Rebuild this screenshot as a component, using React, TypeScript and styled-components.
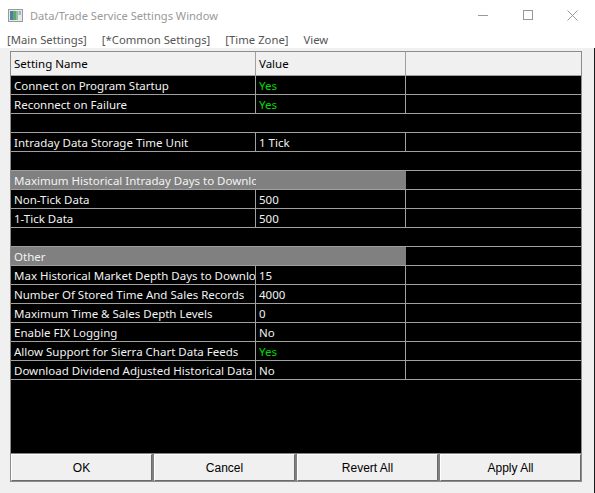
import * as React from 'react'
import styled, { createGlobalStyle } from 'styled-components'

const Global = createGlobalStyle`
  html, body { margin: 0; padding: 0; background: #ffffff; }
  body { font-family: "Noto Sans", "Open Sans", sans-serif; }
`

type Row =
  | { kind: 'item'; name: string; value: string; green?: boolean }
  | { kind: 'section'; name: string }
  | { kind: 'blank' }

const rows: Row[] = [
  { kind: 'item', name: 'Connect on Program Startup', value: 'Yes', green: true },
  { kind: 'item', name: 'Reconnect on Failure', value: 'Yes', green: true },
  { kind: 'blank' },
  { kind: 'item', name: 'Intraday Data Storage Time Unit', value: '1 Tick' },
  { kind: 'blank' },
  { kind: 'section', name: 'Maximum Historical Intraday Days to Download' },
  { kind: 'item', name: 'Non-Tick Data', value: '500' },
  { kind: 'item', name: '1-Tick Data', value: '500' },
  { kind: 'blank' },
  { kind: 'section', name: 'Other' },
  { kind: 'item', name: 'Max Historical Market Depth Days to Download', value: '15' },
  { kind: 'item', name: 'Number Of Stored Time And Sales Records', value: '4000' },
  { kind: 'item', name: 'Maximum Time & Sales Depth Levels', value: '0' },
  { kind: 'item', name: 'Enable FIX Logging', value: 'No' },
  { kind: 'item', name: 'Allow Support for Sierra Chart Data Feeds', value: 'Yes', green: true },
  { kind: 'item', name: 'Download Dividend Adjusted Historical Data', value: 'No' },
]

const Window = styled.div`
  width: 595px;
  height: 493px;
  display: flex;
  flex-direction: column;
  background: #ffffff;
  overflow: hidden;
`

const TitleBar = styled.div`
  height: 30px;
  display: flex;
  align-items: center;
  padding-left: 8px;
  font-size: 11.1px;
  color: #999999;
`

const Title = styled.span`
  margin-left: 7px;
  flex: 1;
`

const Controls = styled.div`
  display: flex;
  height: 30px;
`

const Ctl = styled.div`
  width: 45px;
  height: 30px;
  display: flex;
  align-items: center;
  justify-content: center;
`

const MenuBar = styled.div`
  height: 18px;
  display: flex;
  align-items: center;
  padding-left: 7px;
  gap: 15px;
  font-size: 11.3px;
  color: #555555;
`

const Body = styled.div`
  flex: 1;
  background: #f0f0f0;
  padding: 3px 12px 11px 10px;
  border-right: 1px solid #1a1a1a;
  display: flex;
`

const Panel = styled.div`
  flex: 1;
  display: flex;
  flex-direction: column;
  border: 1px solid #8c8c8c;
  background: #000000;
`

const Grid = styled.div`
  flex: 1;
  display: flex;
  flex-direction: column;
`

const HeaderRow = styled.div`
  height: 23px;
  display: flex;
  background: #f0f0f0;
  border-bottom: 1px solid #a0a0a0;
  font-size: 11.5px;
  color: #000000;
`

const Line = styled.div`
  height: 18px;
  display: flex;
  border-bottom: 1px solid #a0a0a0;
  font-size: 11.5px;
  color: #f2f2f2;
  background: #000000;
`

const Cell = styled.div<{ $w?: number; $green?: boolean; $edge?: boolean }>`
  width: ${({ $w }) => ($w ? `${$w}px` : 'auto')};
  flex: ${({ $w }) => ($w ? 'none' : '1')};
  box-sizing: border-box;
  padding-left: 3px;
  display: flex;
  align-items: center;
  white-space: nowrap;
  overflow: hidden;
  border-right: ${({ $edge }) => ($edge ? '1px solid #a0a0a0' : 'none')};
  color: ${({ $green }) => ($green ? '#00dc00' : 'inherit')};
`

const SectionFill = styled.div`
  width: 395px;
  flex: none;
  background: #808080;
  display: flex;
  align-items: center;
`

const SectionText = styled.div`
  width: 245px;
  padding-left: 3px;
  box-sizing: border-box;
  white-space: nowrap;
  overflow: hidden;
`

const Buttons = styled.div`
  display: flex;
  gap: 2px;
  background: #808080;
  border-top: 1px solid #808080;
`

const Button = styled.button`
  flex: 1;
  height: 27px;
  margin: 0;
  padding: 0;
  background: #f0f0f0;
  border-style: solid;
  border-width: 1px;
  border-color: #ffffff #6b6b6b #6b6b6b #ffffff;
  font-family: "Liberation Sans", Arial, sans-serif;
  font-size: 12px;
  color: #000000;
`

const AppIcon = () => (
  <svg width="15" height="13" viewBox="0 0 15 13">
    <rect x="0.5" y="0.5" width="14" height="12" fill="#e8e8e8" stroke="#9a9a9a" />
    <rect x="2" y="2" width="3" height="9" fill="#4a7fb0" />
    <rect x="5" y="2" width="3" height="9" fill="#5fa86a" />
    <rect x="8" y="2" width="2" height="9" fill="#8ec0a0" />
    <rect x="10.5" y="2" width="2.5" height="4" fill="#9fb6c8" />
  </svg>
)

export default function App() {
  return (
    <>
      <Global />
      <Window>
        <TitleBar>
          <AppIcon />
          <Title>Data/Trade Service Settings Window</Title>
          <Controls>
            <Ctl>
              <svg width="10" height="10" viewBox="0 0 10 10">
                <path d="M0 5.5h10" stroke="#999" strokeWidth="1" />
              </svg>
            </Ctl>
            <Ctl>
              <svg width="10" height="10" viewBox="0 0 10 10">
                <rect x="0.5" y="0.5" width="9" height="9" fill="none" stroke="#999" />
              </svg>
            </Ctl>
            <Ctl>
              <svg width="11" height="11" viewBox="0 0 11 11">
                <path d="M0.5 0.5l10 10M10.5 0.5l-10 10" stroke="#999" strokeWidth="1" />
              </svg>
            </Ctl>
          </Controls>
        </TitleBar>
        <MenuBar>
          <span>[Main Settings]</span>
          <span>[*Common Settings]</span>
          <span>[Time Zone]</span>
          <span>View</span>
        </MenuBar>
        <Body>
          <Panel>
            <Grid>
              <HeaderRow>
                <Cell $w={245} $edge>Setting Name</Cell>
                <Cell $w={150} $edge>Value</Cell>
                <Cell />
              </HeaderRow>
              {rows.map((r, i) => {
                if (r.kind === 'blank') return <Line key={i} />
                if (r.kind === 'section')
                  return (
                    <Line key={i}>
                      <SectionFill>
                        <SectionText>{r.name}</SectionText>
                      </SectionFill>
                      <Cell />
                    </Line>
                  )
                return (
                  <Line key={i}>
                    <Cell $w={245} $edge>{r.name}</Cell>
                    <Cell $w={150} $edge $green={r.green}>{r.value}</Cell>
                    <Cell />
                  </Line>
                )
              })}
            </Grid>
            <Buttons>
              <Button>OK</Button>
              <Button>Cancel</Button>
              <Button>Revert All</Button>
              <Button>Apply All</Button>
            </Buttons>
          </Panel>
        </Body>
      </Window>
    </>
  )
}
